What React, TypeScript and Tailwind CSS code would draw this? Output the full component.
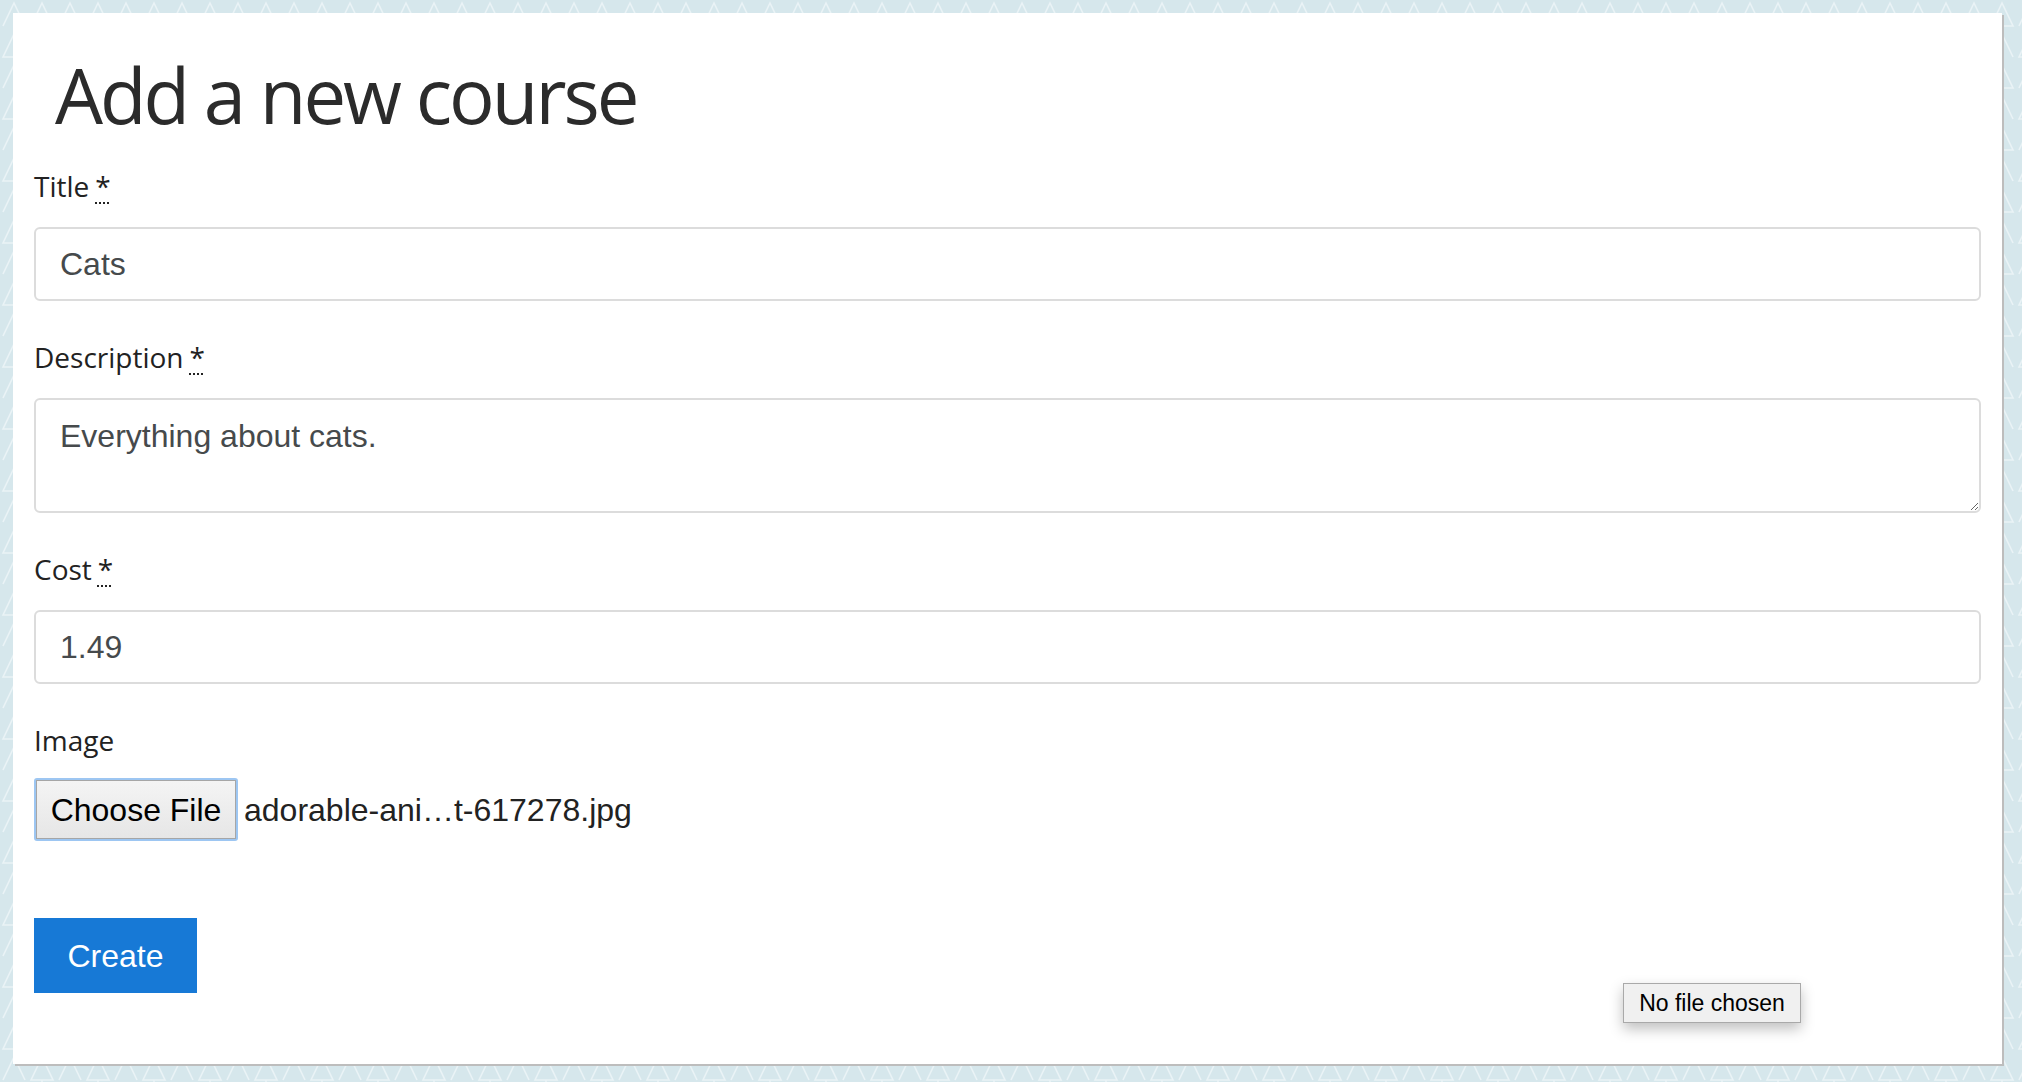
import React from "react";

function Required() {
  return (
    <abbr
      title="required"
      className="ml-[6px] underline decoration-dotted decoration-2 underline-offset-[5px]"
    >
      *
    </abbr>
  );
}

function Label({ children }: { children: React.ReactNode }) {
  return (
    <label className="block h-[40px] text-[28px] leading-[40px] text-[#222] font-['Open_Sans',sans-serif]">
      {children}
    </label>
  );
}

// light triangles behind the card
function Backdrop() {
  return (
    <svg className="[grid-area:1/1] h-full w-full" aria-hidden="true">
      <defs>
        <pattern id="tri" width="56" height="62" patternUnits="userSpaceOnUse">
          <g fill="none" stroke="#eaf3f6" strokeWidth="1.6">
            <path d="M3 26 L14 3 L25 26" />
            <path d="M31 26 L42 3 L53 26 Z" />
            <path d="M42 26 L42 31" />
            <path d="M31 57 L42 34 L53 57" />
            <path d="M3 57 L14 34 L25 57 Z" />
            <path d="M14 57 L14 62" />
          </g>
        </pattern>
      </defs>
      <rect width="100%" height="100%" fill="#d6e7ec" />
      <rect width="100%" height="100%" fill="url(#tri)" />
    </svg>
  );
}

export default function App() {
  return (
    <main className="grid min-h-screen bg-[#d6e7ec] font-['Liberation_Sans',Arial,sans-serif]">
      <Backdrop />
      <div className="[grid-area:1/1] pt-[13px] pl-[13px] pb-[18px]">
        <div className="relative w-[1989px] h-[1051px] bg-white px-[21px] shadow-[2px_2px_0_#bdbdbd]">
          <h1 className="pl-[21px] pt-[32px] h-[153px] text-[76px] leading-[100px] tracking-[-3px] text-[#2b2b2b] font-['Open_Sans',sans-serif]">
            Add a new course
          </h1>

          <form className="flex flex-col">
            <Label>
              Title
              <Required />
            </Label>
            <input
              readOnly
              value="Cats"
              className="mt-[21px] h-[74px] w-full rounded-[6px] border-2 border-[#dcdcdc] px-[24px] text-[32px] text-[#464a4c] outline-none"
            />

            <div className="mt-[36px]">
              <Label>
                Description
                <Required />
              </Label>
            </div>
            <textarea
              readOnly
              value="Everything about cats."
              className="mt-[21px] h-[115px] w-full rounded-[6px] border-2 border-[#dcdcdc] px-[24px] py-[14px] text-[32px] leading-[44px] text-[#464a4c] outline-none"
            />

            <div className="mt-[36px]">
              <Label>
                Cost
                <Required />
              </Label>
            </div>
            <input
              readOnly
              value="1.49"
              className="mt-[21px] h-[74px] w-full rounded-[6px] border-2 border-[#dcdcdc] px-[24px] text-[32px] text-[#464a4c] outline-none"
            />

            <div className="mt-[36px]">
              <Label>Image</Label>
            </div>
            <div className="mt-[18px] flex items-center gap-[6px]">
              <div className="rounded-[3px] p-[2px] bg-[#9dc6f2]">
                <button
                  type="button"
                  className="h-[59px] w-[200px] border border-[#a6a6a6] bg-gradient-to-b from-[#f4f4f4] to-[#e6e6e6] text-[32px] text-black"
                >
                  Choose File
                </button>
              </div>
              <span className="text-[32px] text-[#222]">adorable-ani…t-617278.jpg</span>
            </div>

            <div className="mt-[77px]">
              <button
                type="button"
                className="h-[75px] w-[163px] bg-[#1779d6] text-[32px] text-white"
              >
                Create
              </button>
            </div>
          </form>

          <div className="absolute left-[1610px] top-[970px] flex h-[40px] w-[178px] items-center justify-center border border-[#a9a9a9] bg-[#f0f0f0] text-[23px] text-black shadow-[0_6px_14px_rgba(0,0,0,0.25)]">
            No file chosen
          </div>
        </div>
      </div>
    </main>
  );
}
